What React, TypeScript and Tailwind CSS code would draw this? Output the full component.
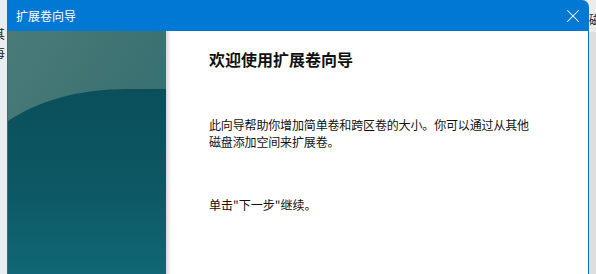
import { X } from "lucide-react";

const font = { fontFamily: '"Noto Sans CJK SC", "Noto Sans", sans-serif' };

function SidePanel() {
  return (
    <svg width="158" height="260" viewBox="0 0 158 260" className="block">
      <defs>
        <linearGradient id="top" x1="0" y1="0" x2="1" y2="1">
          <stop offset="0" stopColor="#4a7b79" />
          <stop offset="1" stopColor="#2d686b" />
        </linearGradient>
        <linearGradient id="low" x1="0" y1="0" x2="0" y2="1">
          <stop offset="0" stopColor="#0a4f5b" />
          <stop offset="0.5" stopColor="#0c5864" />
          <stop offset="1" stopColor="#126a79" />
        </linearGradient>
      </defs>
      <rect width="158" height="260" fill="url(#top)" />
      <path d="M0 90 C 30 70, 70 58, 120 58 L158 58 L158 260 L0 260 Z" fill="url(#low)" />
    </svg>
  );
}

export default function App() {
  return (
    <div className="relative w-[596px] h-[274px] overflow-hidden bg-[#ececec]" style={font}>
      {/* fragments of the window behind */}
      <div className="absolute left-[-7px] top-[24px] text-[12px] leading-[19px] text-[#222]">
        <div>其</div>
        <div>每</div>
      </div>
      <div className="absolute left-[589px] top-[11px] text-[12px] text-[#222]">磁</div>
      <div className="absolute left-[589px] top-[32px] w-[7px] h-[242px] bg-[#dedede]" />

      {/* wizard window */}
      <div className="absolute left-[7px] top-0 w-[582px] h-[300px] rounded-tr-[7px] bg-[#0078d4] px-px">
        <div className="h-[31px] flex items-center justify-between pl-[8px] pr-[4px]">
          <span className="text-white text-[12px]">扩展卷向导</span>
          <X className="text-white" size={22} strokeWidth={1.1} />
        </div>
        <div className="flex bg-white h-[269px]">
          <div className="w-[158px] shrink-0">
            <SidePanel />
          </div>
          <div className="w-[5px] bg-gradient-to-r from-[#d8d8d8] to-white" />
          <div className="pl-[38px] pt-[17px] text-[#111]">
            <h1 className="text-[16px] font-bold leading-[22px]">欢迎使用扩展卷向导</h1>
            <p className="mt-[46px] text-[12px] leading-[17px] w-[340px] tracking-[-0.15px]">
              此向导帮助你增加简单卷和跨区卷的大小。你可以通过从其他
              <br />
              磁盘添加空间来扩展卷。
            </p>
            <p className="mt-[46px] text-[12px] leading-[17px]">单击"下一步"继续。</p>
          </div>
        </div>
      </div>
    </div>
  );
}
